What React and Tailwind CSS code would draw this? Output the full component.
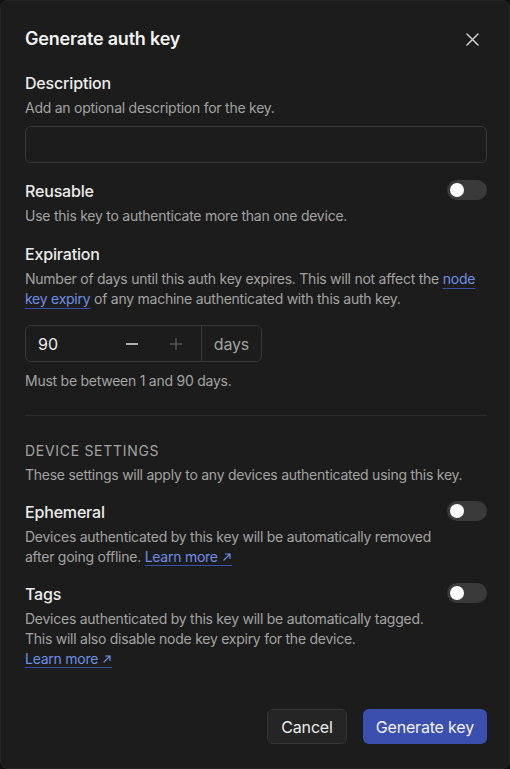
import React, { useState } from 'react';

const Toggle = ({ on, onChange }) => (
    <button
        onClick={() => onChange(!on)}
        className={`mt-px flex h-5 w-10 shrink-0 items-center rounded-full px-[3px] ${on ? 'bg-[#3f52ad]' : 'bg-[#3a3a3a]'}`}
    >
        <span className={`h-[14px] w-[14px] rounded-full bg-white transition-transform ${on ? 'translate-x-5' : ''}`} />
    </button>
);

const ArrowUpRight = () => (
    <svg width="10" height="10" viewBox="0 0 10 10" fill="none" className="ml-1 inline-block align-[0px]">
        <path d="M2 8 L8 2 M3.5 2 H8 V6.5" stroke="currentColor" strokeWidth="1.2" strokeLinecap="round" strokeLinejoin="round" />
    </svg>
);

const Link = ({ children }) => (
    <a href="#" className="text-[#6f8ee6] underline decoration-[#3b53a6] underline-offset-4">
        {children}
    </a>
);

// link with trailing arrow, underline runs under the arrow too
const LearnMore = () => (
    <a href="#" className="whitespace-nowrap border-b border-[#3b53a6] text-[#6f8ee6]">
        Learn more<ArrowUpRight />
    </a>
);

const ToggleRow = ({ label, on, onChange, children }) => (
    <div className="flex items-start gap-3">
        <div className="flex-1">
            <div className="text-base font-medium leading-6 tracking-[-0.011em] text-[#ececec]">{label}</div>
            <p className="mt-[3px] text-sm leading-5 tracking-[-0.018em] text-[#a3a3a3]">{children}</p>
        </div>
        <Toggle on={on} onChange={onChange} />
    </div>
);

export default function App() {
    const [reusable, setReusable] = useState(false);
    const [ephemeral, setEphemeral] = useState(false);
    const [tags, setTags] = useState(false);
    const [days, setDays] = useState(90);

    return (
        <div className="min-h-screen bg-[#101010]" style={{ fontFamily: 'Inter, "Noto Sans", sans-serif' }}>
            <div className="flex h-[769px] flex-col rounded-lg border border-[#262626] bg-[#1c1c1c] pt-6 pr-[22px] pb-6 pl-6">
                <div className="flex items-center justify-between">
                    <h1 className="text-lg leading-7 font-semibold tracking-[-0.011em] text-[#f2f2f2]">Generate auth key</h1>
                    <button className="mr-[8px] text-[#cfcfcf]">
                        <svg width="13" height="13" viewBox="0 0 13 13" fill="none">
                            <path d="M1 1 L12 12 M12 1 L1 12" stroke="currentColor" strokeWidth="1.5" strokeLinecap="round" />
                        </svg>
                    </button>
                </div>

                <div className="mt-[18px]">
                    <div className="text-base font-medium leading-6 tracking-[-0.011em] text-[#ececec]">Description</div>
                    <p className="mt-[3px] text-sm leading-5 tracking-[-0.018em] text-[#a3a3a3]">Add an optional description for the key.</p>
                    <input
                        type="text"
                        className="mt-2 h-[37px] w-full rounded-md border border-[#383838] bg-transparent px-3 text-sm text-[#ececec] outline-none"
                    />
                </div>

                <div className="mt-4">
                    <ToggleRow label="Reusable" on={reusable} onChange={setReusable}>
                        Use this key to authenticate more than one device.
                    </ToggleRow>
                </div>

                <div className="mt-4">
                    <div className="text-base font-medium leading-6 tracking-[-0.011em] text-[#ececec]">Expiration</div>
                    <p className="mt-[3px] text-sm leading-5 tracking-[-0.018em] text-[#a3a3a3]">
                        Number of days until this auth key expires. This will not affect the <Link>node key expiry</Link> of any machine authenticated with this auth key.
                    </p>
                    <div className="mt-4 flex h-[37px] w-[237px] rounded-md border border-[#383838]">
                        <div className="flex flex-1 items-center pl-3 pr-[3px]">
                            <span className="flex-1 text-base text-[#ececec]">{days}</span>
                            <button onClick={() => setDays(Math.max(1, days - 1))} className="flex w-11 justify-center text-[#d6d6d6]">
                                <svg width="14" height="14" viewBox="0 0 14 14"><path d="M1 7 H13" stroke="currentColor" strokeWidth="1.6" /></svg>
                            </button>
                            <button onClick={() => setDays(Math.min(90, days + 1))} className="flex w-11 justify-center text-[#555555]">
                                <svg width="14" height="14" viewBox="0 0 14 14"><path d="M1 7 H13 M7 1 V13" stroke="currentColor" strokeWidth="1.4" /></svg>
                            </button>
                        </div>
                        <div className="flex w-[60px] items-center justify-center border-l border-[#383838] text-base tracking-[-0.011em] text-[#a3a3a3]">days</div>
                    </div>
                    <p className="mt-[9px] text-sm leading-5 tracking-[-0.018em] text-[#a3a3a3]">Must be between 1 and 90 days.</p>
                </div>

                <div className="mt-6 border-t border-[#2c2c2c]" />

                <div className="mt-[25px]">
                    <div className="text-sm leading-5 tracking-wider text-[#a3a3a3] uppercase">Device settings</div>
                    <p className="mt-1 text-sm leading-5 tracking-[-0.018em] text-[#a3a3a3]">These settings will apply to any devices authenticated using this key.</p>
                </div>

                <div className="mt-[15px]">
                    <ToggleRow label="Ephemeral" on={ephemeral} onChange={setEphemeral}>
                        Devices authenticated by this key will be automatically removed after going offline. <LearnMore />
                    </ToggleRow>
                </div>

                <div className="mt-[15px]">
                    <ToggleRow label="Tags" on={tags} onChange={setTags}>
                        Devices authenticated by this key will be automatically tagged. This will also disable node key expiry for the device. <LearnMore />
                    </ToggleRow>
                </div>

                <div className="mt-auto flex justify-end gap-4">
                    <button className="h-[35px] rounded-md border border-[#353535] bg-[#252525] px-[13px] text-base tracking-[-0.011em] text-[#ececec]">Cancel</button>
                    <button className="h-[35px] rounded-md bg-[#3b4fae] px-[13px] text-base tracking-[-0.011em] text-[#f2f2f2]">Generate key</button>
                </div>
            </div>
        </div>
    );
}
